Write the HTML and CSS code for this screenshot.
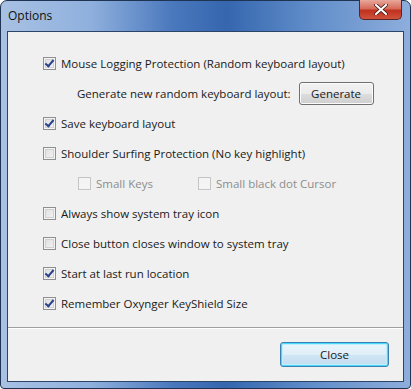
FILE: index.html
```html
<!DOCTYPE html>
<html>
<head>
<meta charset="utf-8">
<link rel="stylesheet" href="styles.css">
</head>
<body>
<div class="window">
  <div class="titlebar">
    <span class="title">Options</span>
    <div class="close-x">
      <svg width="14" height="11" viewBox="0 0 14 11"><path d="M2 1 L12 10 M12 1 L2 10" stroke="#3a1010" stroke-width="3.6" stroke-linecap="round"/><path d="M2 1 L12 10 M12 1 L2 10" stroke="#ffffff" stroke-width="2.2" stroke-linecap="round"/></svg>
    </div>
  </div>
  <div class="client">
    <div class="options">
      <div class="row"><span class="cb checked"></span><span>Mouse Logging Protection (Random keyboard layout)</span></div>
      <div class="row gen"><span>Generate new random keyboard layout:</span><button class="btn generate">Generate</button></div>
      <div class="row"><span class="cb checked"></span><span>Save keyboard layout</span></div>
      <div class="row"><span class="cb"></span><span>Shoulder Surfing Protection (No key highlight)</span></div>
      <div class="row sub disabled">
        <div class="subitem first"><span class="cb dis"></span><span>Small Keys</span></div>
        <div class="subitem"><span class="cb dis"></span><span>Small black dot Cursor</span></div>
      </div>
      <div class="row"><span class="cb"></span><span>Always show system tray icon</span></div>
      <div class="row"><span class="cb"></span><span>Close button closes window to system tray</span></div>
      <div class="row"><span class="cb checked"></span><span>Start at last run location</span></div>
      <div class="row"><span class="cb checked"></span><span>Remember Oxynger KeyShield Size</span></div>
    </div>
    <div class="footer">
      <button class="btn close">Close</button>
    </div>
  </div>
</div>
</body>
</html>
```
FILE: styles.css
```css
html, body { margin: 0; padding: 0; background: #ffffff; }
body { font-family: "Open Sans", "Noto Sans", sans-serif; font-size: 11.5px; color: #1a1a1a; }

.window {
  box-sizing: border-box;
  width: 411px;
  height: 389px;
  border: 1px solid #1f3352;
  border-radius: 7px 7px 4px 4px;
  background: linear-gradient(90deg, #a8c1e3 0%, #8fb0dd 22%, #4a78bd 42%, #3566ae 55%, #5f8cc9 75%, #8eaedc 100%);
  padding: 0 6px 6px 6px;
  display: flex;
  flex-direction: column;
  position: relative;
}

.titlebar {
  height: 30px;
  display: flex;
  align-items: center;
  padding-left: 1px;
}
.title { font-size: 12px; color: #111; margin-top: -1px; }

.close-x {
  position: absolute;
  top: -1px;
  right: 8px;
  width: 43px;
  height: 20px;
  box-sizing: border-box;
  border: 1px solid #5a2424;
  border-top: none;
  border-radius: 0 0 5px 5px;
  background: linear-gradient(180deg, #e8a89c 0%, #d66b5a 45%, #c0321f 55%, #d0523c 100%);
  display: flex;
  align-items: center;
  justify-content: center;
}

.client {
  flex: 1;
  border: 1px solid #2c4467;
  background: #f0f0f0;
  display: flex;
  flex-direction: column;
}

.options {
  flex: 1;
  padding: 16px 0 0 35px;
  display: flex;
  flex-direction: column;
}

.row {
  height: 30px;
  display: flex;
  align-items: center;
  gap: 5px;
}

.row.gen { padding-left: 34px; gap: 8px; }
.row.sub { padding-left: 35px; gap: 0; }
.subitem { display: flex; align-items: center; gap: 5px; }
.subitem.first { width: 120px; }
.disabled { color: #8d8d8d; }

.cb {
  width: 13px;
  height: 13px;
  box-sizing: border-box;
  border: 1px solid #8e8f8f;
  background: linear-gradient(135deg, #dcdcdc 0%, #f6f6f6 100%);
  box-shadow: inset 0 0 0 1px #f4f4f4, inset 0 0 0 2px #d0d0d0;
  flex: none;
  position: relative;
}
.cb.dis { border-color: #c5c5c5; box-shadow: none; background: #f4f4f4; }
.cb.checked::after {
  content: "";
  position: absolute;
  left: 3px;
  top: 0px;
  width: 3px;
  height: 7px;
  border: solid #27408b;
  border-width: 0 2px 2px 0;
  transform: rotate(40deg);
}

.btn {
  font-family: inherit;
  font-size: 11.5px;
  color: #1a1a1a;
  border: 1px solid #707070;
  border-radius: 3px;
  background: linear-gradient(180deg, #f2f2f2 0%, #ebebeb 50%, #dddddd 51%, #cfcfcf 100%);
  box-shadow: inset 0 0 0 1px #fbfbfb;
  padding: 0;
  cursor: default;
}
.generate { width: 75px; height: 23px; }

.footer {
  height: 53px;
  border-top: 1px solid #a0a0a0;
  box-shadow: inset 0 1px 0 #ffffff;
  display: flex;
  align-items: center;
  justify-content: flex-end;
  padding-right: 14px;
}
.close {
  width: 109px;
  height: 25px;
  border-color: #3c7fb1;
  box-shadow: inset 0 0 0 1px #48d8fb, inset 0 0 0 2px #bfeefc;
  background: linear-gradient(180deg, #eaf6fd 0%, #e0eef8 50%, #d0e6f5 51%, #c2dcef 100%);
}
```
